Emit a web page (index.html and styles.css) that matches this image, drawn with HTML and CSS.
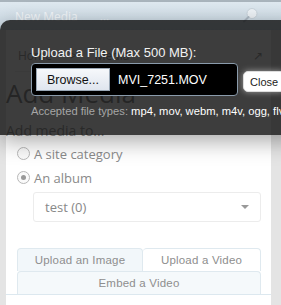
FILE: index.html
```html
<!DOCTYPE html>
<html>
<head>
  <title>New Media</title>
  <link rel="stylesheet" href="styles.css">
</head>
<body>
  <div class="topbar">
    <span class="site">New Media</span>
    <span class="more">...</span>
    <svg class="search" width="18" height="16" viewBox="0 0 18 16">
      <circle cx="11" cy="6.5" r="5" fill="#eef3f7" stroke="#c9d4dc" stroke-width="1"/>
      <line x1="7.5" y1="10" x2="3" y2="14.5" stroke="#aebbc6" stroke-width="2" stroke-linecap="round"/>
    </svg>
  </div>

  <div class="content">
    <div class="crumbs">
      <span>Home</span><span class="sep">&gt;</span><span>Media</span>
      <span class="crumb-arrow">&#8599;</span>
    </div>
    <h1>Add Media</h1>
    <p class="hint">Add media to...</p>

    <label class="radio"><span class="dot"></span>A site category</label>
    <label class="radio"><span class="dot on"></span>An album</label>

    <div class="select">
      <span>test (0)</span>
      <span class="caret"></span>
    </div>

    <div class="tabs">
      <div class="tab-row">
        <div class="tab">Upload an Image</div>
        <div class="tab active">Upload a Video</div>
      </div>
      <div class="tab wide">Embed a Video</div>
    </div>
    <div class="rule"></div>
  </div>

  <div class="overlay">
    <div class="upload-label">Upload a File (Max 500 MB):</div>
    <div class="upload-row">
      <div class="file-box">
        <button class="browse">Browse...</button>
        <span class="file-name">MVI_7251.MOV</span>
      </div>
      <button class="close">Close</button>
    </div>
    <div class="types"><span class="muted">Accepted file types:</span> mp4, mov, webm, m4v, ogg, flv</div>
  </div>
</body>
</html>
```

FILE: styles.css
```css
body { margin: 0; width: 281px; height: 305px; overflow: hidden; position: relative; background: #e4e4e4; font-family: "Open Sans", sans-serif; }

.topbar { height: 30px; background: linear-gradient(#dfe9f0, #c9d8e3); border-top: 2px solid #a9b4bc; display: flex; align-items: flex-start; padding: 6px 0 0 15px; box-sizing: border-box; color: #f4f8fb; font-size: 12px; }
.topbar .more { margin-left: 22px; }
.topbar .search { margin-left: auto; margin-right: 22px; margin-top: -1px; }

.content { background: #fff; margin: 0 10px 0 6px; height: 275px; color: #999; }
.crumbs { margin: 0 0 0 9px; padding: 17px 0 0 3px; height: 42px; box-sizing: border-box; font-size: 12px; display: flex; gap: 18px; border-bottom: 1px solid #eee; }
.crumbs .crumb-arrow { margin-left: auto; margin-right: 8px; }
h1 { margin: 6px 0 0; font-size: 26px; font-weight: normal; line-height: 30px; color: #888; }
.hint { margin: 14px 0 0; font-size: 14px; line-height: 18px; }

.radio { display: flex; align-items: center; gap: 4px; margin: 5px 0 0 11px; font-size: 13px; line-height: 18px; color: #8a8a8a; height: 17px; }
.radio + .radio { margin-top: 7px; }
.dot { width: 11px; height: 11px; border: 1px solid #b8b8b8; border-radius: 50%; background: #fafafa; position: relative; }
.dot.on::after { content: ""; position: absolute; left: 3px; top: 3px; width: 5px; height: 5px; border-radius: 50%; background: #999; }

.select { margin: 6px 10px 0 27px; height: 30px; border: 1px solid #ececec; border-radius: 3px; box-sizing: border-box; display: flex; align-items: center; padding: 0 11px; font-size: 13px; color: #888; }
.caret { margin-left: auto; border: 4px solid transparent; border-top: 4px solid #999; margin-top: 4px; }

.tabs { margin: 26px 10px 0 11px; font-family: "Liberation Sans", sans-serif; font-size: 11.5px; color: #8e8e8e; letter-spacing: 0.2px; }
.tab-row { display: flex; }
.tab { height: 23px; line-height: 23px; text-align: center; border: 1px solid #dfe9ef; border-bottom: none; border-radius: 4px 4px 0 0; background: #f2f7fa; box-sizing: border-box; }
.tab-row .tab:first-child { width: 126px; }
.tab-row .tab.active { flex: 1; background: #fff; border-left: none; }
.tab.wide { background: #f5f9fb; border-radius: 4px 4px 0 0; }
.rule { height: 1px; background: #dce8ef; }

.overlay { position: absolute; left: 0; top: 20px; width: 300px; height: 115px; background: rgba(12, 12, 12, 0.8); border-radius: 10px 0 0 0; padding: 25px 0 0 31px; box-sizing: border-box; box-shadow: 0 6px 22px rgba(0, 0, 0, 0.35); font-family: "Liberation Sans", sans-serif; }
.upload-label { color: #f2f2f2; font-size: 13px; line-height: 16px; }
.upload-row { display: flex; align-items: center; gap: 5px; margin-top: 2px; }
.file-box { width: 207px; height: 33px; background: #000; border: 1px solid #8a9bab; border-radius: 4px; box-sizing: border-box; display: flex; align-items: center; padding-left: 4px; }
.browse { width: 74px; height: 23px; border: 1px solid #9aa8b6; background: linear-gradient(#f6f8fb, #dfe5ee); font-family: "Liberation Sans", sans-serif; font-size: 12.5px; color: #111; padding: 0; }
.file-name { color: #fff; font-size: 12.5px; margin-left: 8px; }
.close { height: 21px; padding: 0 6px; background: #fff; border: 1px solid #ddd; border-radius: 5px; box-shadow: 0 0 6px rgba(255, 255, 255, 0.5); font-family: "Liberation Sans", sans-serif; font-size: 11px; color: #222; margin-top: 4px; }
.types { margin-top: 9px; color: #fff; font-size: 11.2px; white-space: nowrap; }
.types .muted { color: #a6a6a6; }
```
